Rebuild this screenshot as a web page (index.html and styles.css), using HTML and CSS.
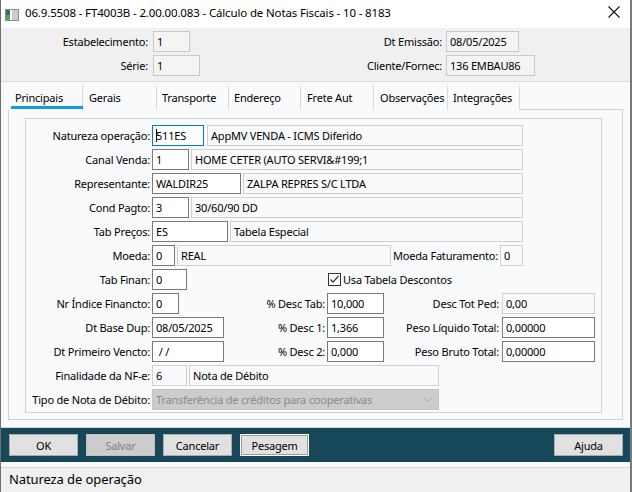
FILE: index.html
```html
<!DOCTYPE html>
<html lang="pt">
<head>
<meta charset="utf-8">
<title>Cálculo de Notas Fiscais</title>
<link rel="stylesheet" href="styles.css">
</head>
<body>
<div class="win">
  <div class="titlebar">
    <svg class="appicon" width="14" height="12" viewBox="0 0 14 12">
      <rect x="0.5" y="0.5" width="13" height="11" fill="#e9eaea" stroke="#8c8f90"/>
      <rect x="1" y="1" width="4" height="10" fill="#2f7067"/>
      <rect x="1" y="6" width="4" height="5" fill="#5fa05a"/>
      <rect x="5" y="1" width="2" height="10" fill="#ffffff"/>
      <rect x="7" y="1" width="6" height="10" fill="#c9cbcc"/>
    </svg>
    <span class="title">06.9.5508 - FT4003B - 2.00.00.083 - Cálculo de Notas Fiscais - 10 - 8183</span>
    <svg class="close" width="12" height="12" viewBox="0 0 12 12">
      <path d="M0.5 0.5 L11.5 11.5 M11.5 0.5 L0.5 11.5" stroke="#111" stroke-width="1.1" fill="none"/>
    </svg>
  </div>

  <div class="header">
    <div class="hgrid">
      <span class="hlabel">Estabelecimento:</span>
      <span class="hbox w37">1</span>
      <span class="hlabel">Dt Emissão:</span>
      <span class="hbox w73">08/05/2025</span>
      <span class="hlabel">Série:</span>
      <span class="hbox w47">1</span>
      <span class="hlabel">Cliente/Fornec:</span>
      <span class="hbox w89">136 EMBAU86</span>
    </div>
  </div>

  <div class="main">
    <div class="tabs">
      <span class="tab active t1">Principais</span>
      <span class="tab t2">Gerais</span>
      <span class="tab t3">Transporte</span>
      <span class="tab t4">Endereço</span>
      <span class="tab t5">Frete Aut</span>
      <span class="tab t6">Observações</span>
      <span class="tab t7">Integrações</span>
      <span class="tabfill"></span>
    </div>
    <div class="panel">
      <div class="group">
        <div class="row">
          <span class="lbl">Natureza operação:</span>
          <span class="in focus w52"><i class="caret"></i>511ES</span>
          <span class="ro w316 m3">AppMV VENDA - ICMS Diferido</span>
        </div>
        <div class="row">
          <span class="lbl">Canal Venda:</span>
          <span class="in w37">1</span>
          <span class="ro w332 m2">HOME CETER (AUTO SERVI&amp;#199;1</span>
        </div>
        <div class="row">
          <span class="lbl">Representante:</span>
          <span class="in w89">WALDIR25</span>
          <span class="ro w280 m2">ZALPA REPRES S/C LTDA</span>
        </div>
        <div class="row">
          <span class="lbl">Cond Pagto:</span>
          <span class="in w37">3</span>
          <span class="ro w332 m2">30/60/90 DD</span>
        </div>
        <div class="row">
          <span class="lbl">Tab Preços:</span>
          <span class="in w76">ES</span>
          <span class="ro w293 m2">Tabela Especial</span>
        </div>
        <div class="row">
          <span class="lbl">Moeda:</span>
          <span class="in w23">0</span>
          <span class="ro w214 m2">REAL</span>
          <span class="lbl2 w107">Moeda Faturamento:</span>
          <span class="ro w23 m2">0</span>
        </div>
        <div class="row">
          <span class="lbl">Tab Finan:</span>
          <span class="in w35">0</span>
          <span class="check">
            <svg width="13" height="13" viewBox="0 0 13 13">
              <rect x="0.5" y="0.5" width="12" height="12" fill="#fff" stroke="#333"/>
              <path d="M2.5 6.5 L5 9.2 L10.5 3" stroke="#333" stroke-width="1.2" fill="none"/>
            </svg>
            <span>Usa Tabela Descontos</span>
          </span>
        </div>
        <div class="row">
          <span class="lbl">Nr Índice Financto:</span>
          <span class="slot"><span class="in w27">0</span></span>
          <span class="lbl2 w101">% Desc Tab:</span>
          <span class="in w57 m2">10,000</span>
          <span class="lbl2 w115">Desc Tot Ped:</span>
          <span class="ro w93 m3">0,00</span>
        </div>
        <div class="row">
          <span class="lbl">Dt Base Dup:</span>
          <span class="slot"><span class="in w72">08/05/2025</span></span>
          <span class="lbl2 w101">% Desc 1:</span>
          <span class="in w57 m2">1,366</span>
          <span class="lbl2 w115">Peso Líquido Total:</span>
          <span class="in w93 m3">0,00000</span>
        </div>
        <div class="row">
          <span class="lbl">Dt Primeiro Vencto:</span>
          <span class="slot"><span class="in w72">&nbsp;/ /</span></span>
          <span class="lbl2 w101">% Desc 2:</span>
          <span class="in w57 m2">0,000</span>
          <span class="lbl2 w115">Peso Bruto Total:</span>
          <span class="in w93 m3">0,00000</span>
        </div>
        <div class="row">
          <span class="lbl">Finalidade da NF-e:</span>
          <span class="ro w35">6</span>
          <span class="ro w250 m2">Nota de Débito</span>
        </div>
        <div class="row">
          <span class="lbl">Tipo de Nota de Débito:</span>
          <span class="select w287">
            <span>Transferência de créditos para cooperativas</span>
            <svg width="9" height="5" viewBox="0 0 9 5"><path d="M0.5 0.5 L4.5 4.5 L8.5 0.5" stroke="#a8a8a8" fill="none"/></svg>
          </span>
        </div>
      </div>
    </div>
  </div>

  <div class="btnbar">
    <span class="btn">OK</span>
    <span class="btn disabled">Salvar</span>
    <span class="btn">Cancelar</span>
    <span class="btn default">Pesagem</span>
    <span class="spacer"></span>
    <span class="btn">Ajuda</span>
  </div>

  <div class="status">Natureza de operação</div>
</div>
</body>
</html>
```

FILE: styles.css
```css
* { box-sizing: border-box; }
html, body { margin: 0; padding: 0; }
body {
  width: 632px;
  height: 492px;
  overflow: hidden;
  background: #f0f0f0;
  font-family: "Noto Sans", "Open Sans", sans-serif;
  font-size: 11px;
  letter-spacing: -0.2px;
  color: #000;
}
.win {
  width: 632px;
  height: 492px;
  border-left: 1px solid #6f6f6f;
  border-right: 2px solid #7a7a7a;
  display: flex;
  flex-direction: column;
  background: #f9fafb;
}

/* title bar */
.titlebar {
  height: 28px;
  background: #fff;
  display: flex;
  align-items: center;
  flex-shrink: 0;
}
.appicon { margin-left: 4px; margin-top: 1px; }
.title { margin-left: 6px; font-size: 11.5px; letter-spacing: -0.15px; white-space: nowrap; line-height: 1; margin-top: -3px; }
.close { margin-left: auto; margin-right: 10px; margin-top: -4px; }

/* header */
.header {
  height: 54px;
  background: #f0f0f0;
  border-bottom: 1px solid #d9d9d9;
  padding-top: 3px;
  flex-shrink: 0;
}
.hgrid {
  display: grid;
  grid-template-columns: 150px 140px 153px auto;
  grid-auto-rows: 21px;
  row-gap: 3px;
  column-gap: 0;
  align-items: center;
}
.hlabel { text-align: right; padding-right: 3px; white-space: nowrap; }
.hgrid .hbox { margin-left: 2px; }
.hgrid .hlabel:nth-child(3), .hgrid .hlabel:nth-child(7) { padding-right: 2px; }
.hbox {
  height: 21px;
  border: 1px solid #c9c9c9;
  background: #f4f4f4;
  padding: 0 3px;
  display: flex;
  align-items: center;
  white-space: nowrap;
}

/* tabs */
.main { flex: 0 0 auto; border-bottom: 1px solid #d6d6d6; padding-bottom: 7px; }
.tabs {
  display: flex;
  height: 28px;
  margin-left: 7px;
  margin-right: 7px;
}
.tab {
  position: relative;
  height: 28px;
  padding-left: 6px;
  padding-top: 4px;
  border-right: 1px solid #d9d9d9;
  border-top: 6px solid transparent;
  background-clip: padding-box;
  line-height: 12px;
  white-space: nowrap;
}
.t1 { width: 75px; padding-left: 7px; }
.t2 { width: 74px; }
.t3 { width: 72px; padding-left: 5px; }
.t4 { width: 72px; padding-left: 5px; }
.t5 { width: 73px; padding-left: 6px; }
.t6 { width: 74px; padding-left: 6px; }
.t7 { width: 72px; padding-left: 5px; }
.tab.active::after {
  content: "";
  position: absolute;
  left: 3px;
  right: -1px;
  bottom: 1px;
  height: 3px;
  background: #0f9ddf;
}
.tabfill { flex: 1; border-bottom: 1px solid #d3d3d3; }

.panel {
  height: 310px;
  border: 1px solid #d3d3d3;
  border-top: none;
  margin: 0 7px;
  padding: 8px 21px 6px 16px;
}
.group {
  width: 577px;
  height: 295px;
  border: 1px solid #d3d3d3;
  padding-top: 6px;
  display: flex;
  flex-direction: column;
  gap: 3px;
}
.row {
  display: flex;
  align-items: center;
  height: 21px;
}
.lbl { width: 124px; text-align: right; white-space: nowrap; margin-right: 2px; }
.lbl2 { text-align: right; white-space: nowrap; }
.slot { width: 72px; display: flex; }
.in, .ro, .select {
  height: 21px;
  padding: 0 3px;
  display: flex;
  align-items: center;
  white-space: nowrap;
  overflow: hidden;
}
.in { background: #fff; border: 1px solid #7a7a7a; }
.in.focus { border-color: #0078d7; }
.ro { background: #f9fafb; border: 1px solid #d0d0d0; }
.select {
  background: #cccccc;
  border: 1px solid #c4c4c4;
  color: #8a8a8a;
  justify-content: space-between;
  padding-right: 6px;
}
.caret { display: inline-block; width: 1px; height: 13px; background: #000; margin-right: -1px; }
.check { display: flex; align-items: center; margin-left: 141px; gap: 2px; }
.check svg { display: block; }

.m2 { margin-left: 2px; }
.m3 { margin-left: 3px; }
.w23 { width: 23px; }
.w27 { width: 27px; }
.w35 { width: 35px; }
.w37 { width: 37px; }
.w47 { width: 47px; }
.w52 { width: 52px; }
.w57 { width: 57px; }
.w72 { width: 72px; }
.w73 { width: 73px; }
.w76 { width: 76px; }
.w89 { width: 89px; }
.w93 { width: 93px; }
.w101 { width: 101px; }
.w107 { width: 107px; }
.w115 { width: 115px; }
.w214 { width: 214px; }
.w250 { width: 250px; }
.w280 { width: 280px; }
.w287 { width: 287px; }
.w293 { width: 293px; }
.w316 { width: 316px; }
.w332 { width: 332px; }

/* button bar */
.btnbar {
  height: 34px;
  background: #17485a;
  display: flex;
  align-items: flex-start;
  padding: 6px 7px 0 8px;
  gap: 8px;
  flex-shrink: 0;
}
.btn {
  width: 69px;
  height: 22px;
  background: #e1e1e1;
  border: 1px solid #adadad;
  display: flex;
  align-items: center;
  justify-content: center;
  font-size: 11px;
}
.btn.disabled { background: #cccccc; border-color: #bfbfbf; color: #838383; }
.btn.default { border-color: #ffffff; box-shadow: inset 0 0 0 1px #9c9c9c; }
.spacer { flex: 1; }

.status {
  margin-top: 5px;
  flex: 1;
  background: #f0f0f0;
  border-top: 1px solid #d6d6d6;
  padding-left: 8px;
  font-size: 13px;
  letter-spacing: -0.1px;
  line-height: 22px;
}
```
